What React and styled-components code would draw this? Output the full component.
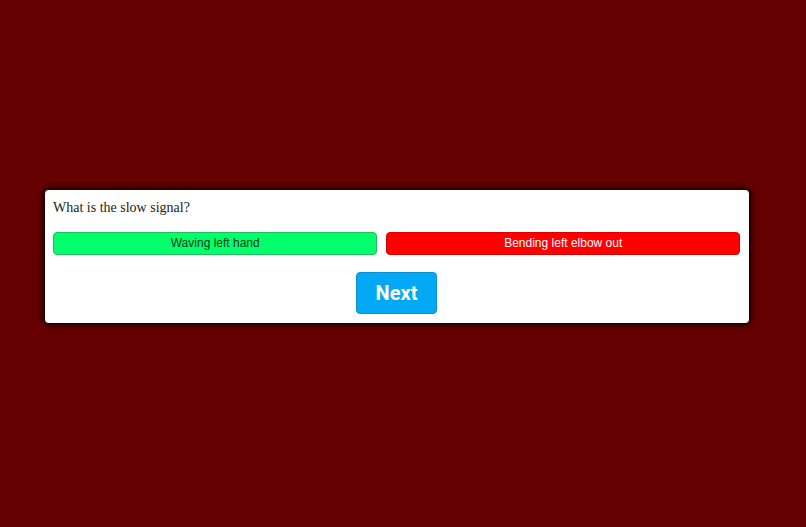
import React from "react";
import styled, { createGlobalStyle } from "styled-components";

const Global = createGlobalStyle`
  html, body { margin: 0; padding: 0; background: #660000; }
  body { min-height: 527px; }
`;

const Page = styled.div`
  box-sizing: border-box;
  min-height: 527px;
  padding: 190px 0 0 45px;
`;

const Card = styled.div`
  box-sizing: border-box;
  width: 704px;
  background: #ffffff;
  border-radius: 4px;
  box-shadow: 0 0 6px 2px rgba(0, 0, 0, 0.9);
  padding: 8px 9px 9px 8px;
  display: flex;
  flex-direction: column;
`;

const Question = styled.p`
  margin: 0;
  font-family: "Liberation Serif", "Times New Roman", serif;
  font-size: 14px;
  line-height: 18px;
  padding-top: 1px;
  margin-bottom: -1px;
  color: #222;
`;

const Answers = styled.div`
  display: flex;
  gap: 9px;
  margin-top: 16px;
`;

const Answer = styled.button`
  flex: 1 1 auto;
  height: 23px;
  box-sizing: border-box;
  border-radius: 4px;
  border: 1px solid ${(p) => (p.$correct ? "#1fbf5c" : "#d90000")};
  background: ${(p) => (p.$correct ? "#00ff6a" : "#ff0000")};
  color: ${(p) => (p.$correct ? "#0b3a1a" : "#ffffff")};
  font-family: "Liberation Sans", Arial, sans-serif;
  font-size: 12px;
  padding: 0 6px 1px;
  cursor: pointer;
`;

const Footer = styled.div`
  display: flex;
  justify-content: center;
  margin-top: 17px;
`;

const NextButton = styled.button`
  width: 81px;
  height: 42px;
  box-sizing: border-box;
  background: #03a9f4;
  border: 1px solid #0a8fd0;
  border-radius: 4px;
  color: #ffffff;
  font-family: Roboto, "Liberation Sans", Arial, sans-serif;
  font-weight: 700;
  font-size: 20px;
  cursor: pointer;
`;

export default function App() {
  return (
    <Page>
      <Global />
      <Card>
        <Question>What is the slow signal?</Question>
        <Answers>
          <Answer $correct>Waving left hand</Answer>
          <Answer>Bending left elbow out</Answer>
        </Answers>
        <Footer>
          <NextButton>Next</NextButton>
        </Footer>
      </Card>
    </Page>
  );
}
